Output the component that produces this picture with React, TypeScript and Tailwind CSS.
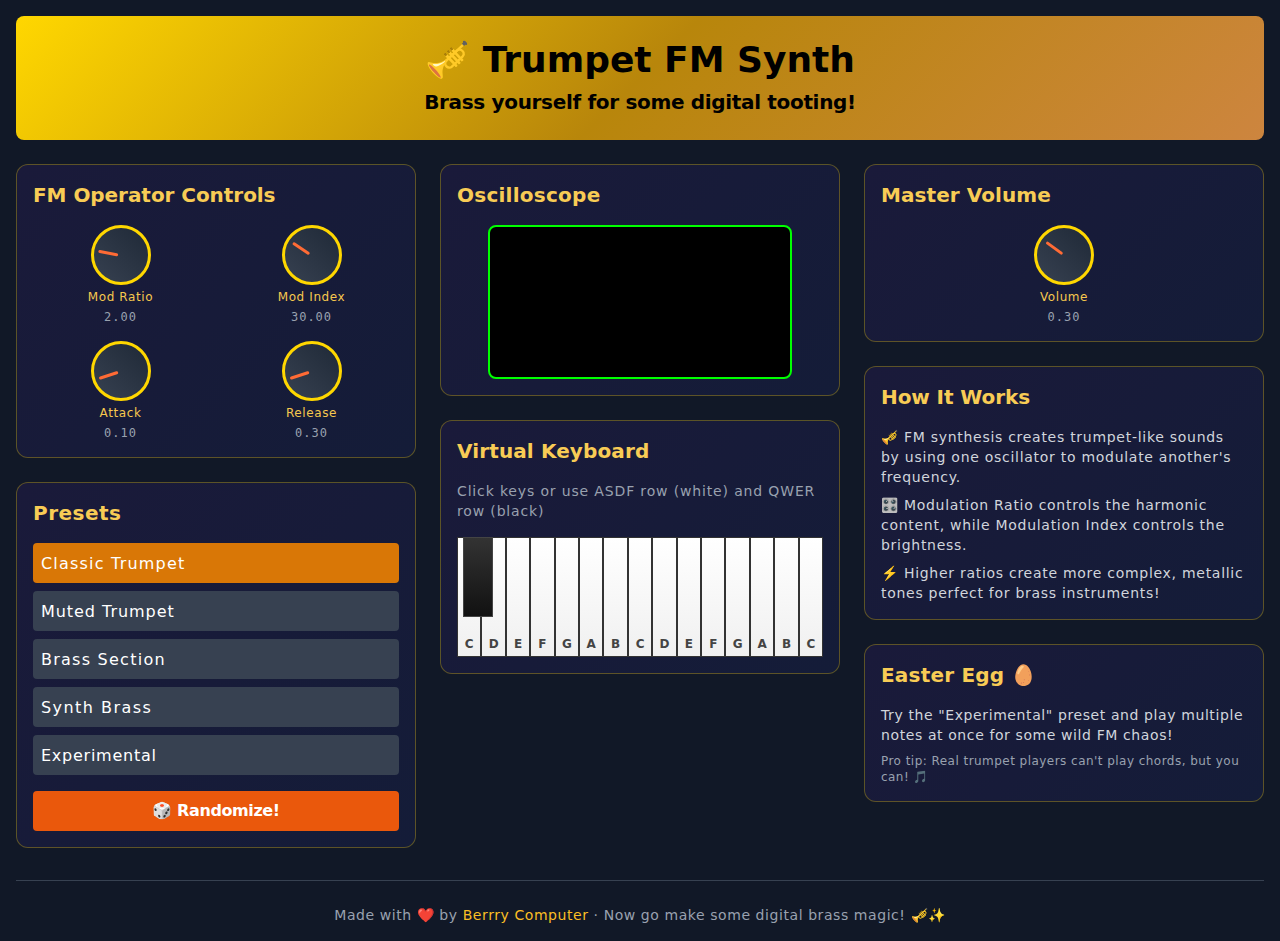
const card = "rounded-xl border border-[#ffd7004d] bg-[linear-gradient(135deg,#1a1a3a,#141c38)] p-4";

function Title({ children, t }: { children: React.ReactNode; t: string }) {
  return <h2 className={`mb-4 text-xl leading-7 font-bold text-[#f8cc55] ${t}`}>{children}</h2>;
}

function Knob({ label, value, rot }: { label: string; value: string; rot: string }) {
  return (
    <div className="flex flex-col items-center">
      <div className="relative mb-1 h-[60px] w-[60px] rounded-full border-[3px] border-[#ffd700] bg-[linear-gradient(45deg,#374151,#1f2937)]">
        <div className={`absolute bottom-[calc(50%+2.5px)] left-1/2 -ml-[1.5px] h-5 w-[3px] origin-[50%_calc(100%+2.5px)] rounded-sm bg-[#ff6b35] ${rot}`} />
      </div>
      <div className="text-xs tracking-[0.6px] text-[#f6c84e]">{label}</div>
      <div className="mt-1 text-xs tracking-[1px] text-gray-400 [font-family:'DejaVu_Sans_Mono',monospace]">{value}</div>
    </div>
  );
}

const presets = [
  { n: "Classic Trumpet", t: "tracking-[1.2px]" },
  { n: "Muted Trumpet", t: "tracking-[0.95px]" },
  { n: "Brass Section", t: "tracking-[1.25px]" },
  { n: "Synth Brass", t: "tracking-[1.45px]" },
  { n: "Experimental", t: "tracking-[0.75px]" },
];
const keys = ["C", "D", "E", "F", "G", "A", "B", "C", "D", "E", "F", "G", "A", "B", "C"];

export default function App() {
  return (
    <div className="min-h-[941px] bg-[#111827] p-4 pb-4 text-white [font-family:'DejaVu_Sans',sans-serif]">
      <header className="mb-6 rounded-lg bg-[linear-gradient(135deg,#ffd700,#b8860b,#cd853f)] p-6 text-center text-black">
        <h1 className="mb-2 text-4xl font-bold">🎺 Trumpet FM Synth</h1>
        <p className="text-xl font-bold tracking-[-0.33px]">Brass yourself for some digital tooting!</p>
      </header>

      <div className="grid grid-cols-3 items-start gap-6">
        <div className="flex flex-col gap-6">
          <section className={card}>
            <Title t="tracking-[-0.05px]">FM Operator Controls</Title>
            <div className="grid grid-cols-2 gap-4">
              <Knob label="Mod Ratio" value="2.00" rot="rotate-[-79deg]" />
              <Knob label="Mod Index" value="30.00" rot="rotate-[-56deg]" />
              <Knob label="Attack" value="0.10" rot="rotate-[-108deg]" />
              <Knob label="Release" value="0.30" rot="rotate-[-108deg]" />
            </div>
          </section>
          <section className={card}>
            <Title t="tracking-[0.5px]">Presets</Title>
            <div className="flex flex-col gap-2">
              {presets.map((p, i) => (
                <button key={p.n} className={`h-10 rounded px-2 pt-0.5 text-left text-base text-white ${p.t} ${i === 0 ? "bg-[#d97706]" : "bg-[#374151]"}`}>
                  {p.n}
                </button>
              ))}
            </div>
            <button className="mt-4 h-10 w-full rounded bg-[#ea580c] text-center text-base font-bold tracking-[-0.4px] text-white">🎲 Randomize!</button>
          </section>
        </div>

        <div className="flex flex-col gap-6">
          <section className={card}>
            <Title t="tracking-[0.25px]">Oscilloscope</Title>
            <div className="flex justify-center">
              <div className="h-[154px] w-[304px] rounded-lg border-2 border-[#00ff00] bg-black" />
            </div>
          </section>
          <section className={card}>
            <Title t="tracking-[0.12px]">Virtual Keyboard</Title>
            <p className="mb-4 text-sm tracking-[0.85px] text-gray-400">Click keys or use ASDF row (white) and QWER row (black)</p>
            <div className="relative flex h-[120px]">
              {keys.map((k, i) => (
                <div key={i} className="flex flex-1 items-end justify-center border border-[#333333] bg-[linear-gradient(180deg,#ffffff,#f0f0f0)] pb-1 text-xs font-bold text-[#444444]">
                  {k}
                </div>
              ))}
              <div className="absolute left-[6px] top-0 h-20 w-[30px] border border-[#444444] bg-[linear-gradient(180deg,#333333,#111111)]" />
            </div>
          </section>
        </div>

        <div className="flex flex-col gap-6">
          <section className={card}>
            <Title t="tracking-[0.08px]">Master Volume</Title>
            <Knob label="Volume" value="0.30" rot="rotate-[-54deg]" />
          </section>
          <section className={card}>
            <Title t="tracking-[-0.08px]">How It Works</Title>
            <div className="flex flex-col gap-2 text-sm tracking-[0.72px] text-gray-300">
              <p>🎺 FM synthesis creates trumpet-like sounds by using one oscillator to modulate another's frequency.</p>
              <p>🎛️ Modulation Ratio controls the harmonic content, while Modulation Index controls the brightness.</p>
              <p>⚡️ Higher ratios create more complex, metallic tones perfect for brass instruments!</p>
            </div>
          </section>
          <section className={card}>
            <Title t="tracking-[0.2px]">Easter Egg 🥚</Title>
            <p className="text-sm tracking-[0.6px] text-gray-300">Try the "Experimental" preset and play multiple notes at once for some wild FM chaos!</p>
            <p className="mt-2 text-xs tracking-[0.46px] text-gray-400">Pro tip: Real trumpet players can't play chords, but you can! 🎵</p>
          </section>
        </div>
      </div>

      <footer className="mt-8 border-t border-[#374151] pt-6 text-center text-sm tracking-[0.57px] text-gray-400">
        Made with ❤️ by <span className="text-[#fbbf24]">Berrry Computer</span> · Now go make some digital brass magic! 🎺✨
      </footer>
    </div>
  );
}
